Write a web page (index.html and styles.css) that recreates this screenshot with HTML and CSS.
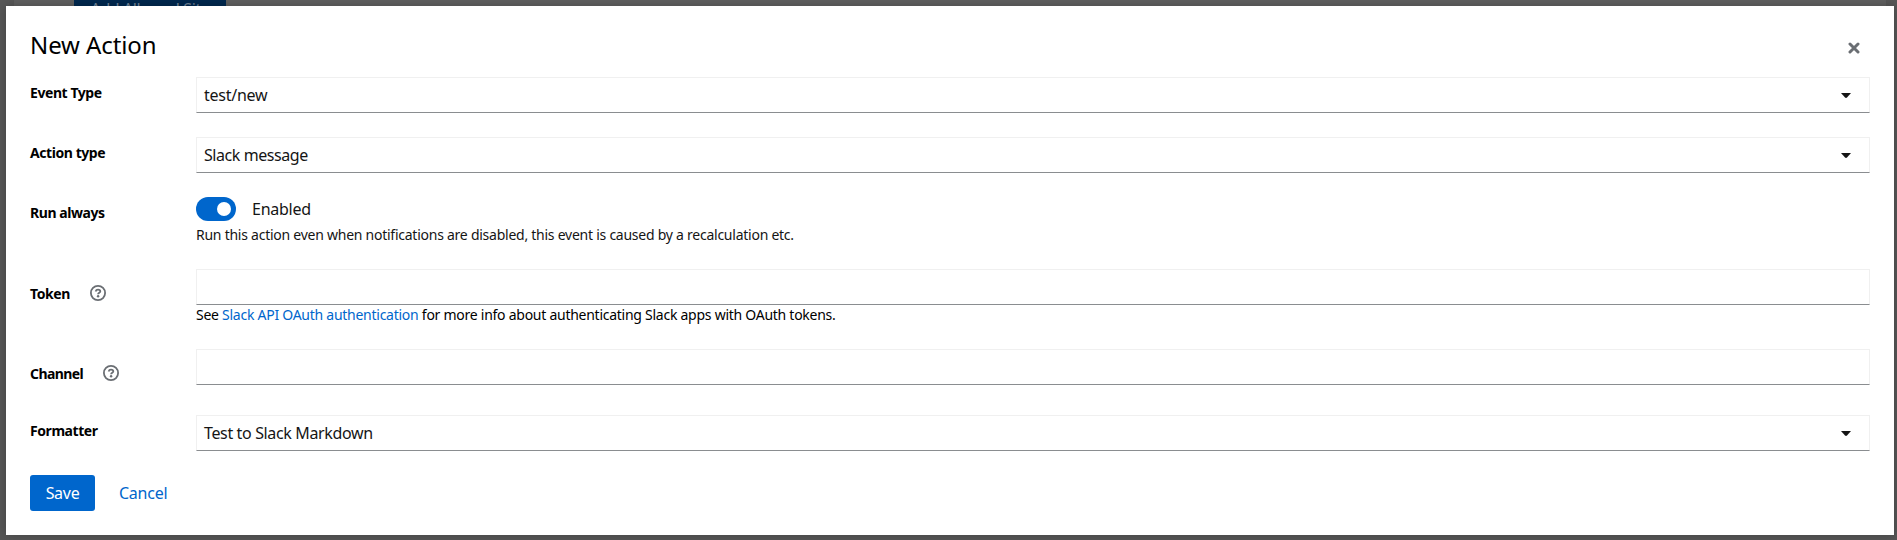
FILE: index.html
```html
<!DOCTYPE html>
<html lang="en">
<head>
<meta charset="utf-8">
<title>New Action</title>
<link rel="stylesheet" href="styles.css">
</head>
<body>
<div class="page"><span class="page-button">Add Allowed Site</span></div>
<main class="modal">
  <header class="header">
    <h1 class="title">New Action</h1>
    <button class="close" aria-label="Close"><svg width="12" height="12" viewBox="0 0 12 12"><path d="M2 2l8 8M10 2l-8 8" stroke="#6a6e73" stroke-width="3" stroke-linecap="round"/></svg></button>
  </header>
  <form class="form">
    <div class="row">
      <label class="label">Event Type</label>
      <div class="select"><span class="value-event">test/new</span><svg width="10" height="5" viewBox="0 0 10 5"><path d="M0 0h10L6 4.600Q5 5.300 4 4.600z" fill="#151515"/></svg></div>
    </div>
    <div class="row">
      <label class="label">Action type</label>
      <div class="select"><span class="value-action">Slack message</span><svg width="10" height="5" viewBox="0 0 10 5"><path d="M0 0h10L6 4.600Q5 5.300 4 4.600z" fill="#151515"/></svg></div>
    </div>
    <div class="row row-switch">
      <label class="label">Run always</label>
      <div class="control">
        <div class="switch"><span class="track"><span class="thumb"></span></span><span class="enabled">Enabled</span></div>
        <p class="help help-run">Run this action even when notifications are disabled, this event is caused by a recalculation etc.</p>
      </div>
    </div>
    <div class="row row-token">
      <label class="label">Token<svg class="hint" width="16" height="16" viewBox="0 0 16 16"><circle cx="8" cy="8" r="7.1" fill="none" stroke="#6a6e73" stroke-width="1.8"/><path d="M5.600 6.400C6 5.100 7 4.700 8 4.700c1.300 0 2.300.7 2.300 1.800C10.300 7.900 8.100 7.800 8.100 9.300" fill="none" stroke="#6a6e73" stroke-width="1.800"/><circle cx="8.100" cy="11.300" r="1.200" fill="#6a6e73"/></svg></label>
      <div class="control">
        <input class="input" type="text" aria-label="Token">
        <p class="help help-token">See <a class="link">Slack API OAuth authentication</a> for more info about authenticating Slack apps with OAuth tokens.</p>
      </div>
    </div>
    <div class="row row-channel">
      <label class="label">Channel<svg class="hint" width="16" height="16" viewBox="0 0 16 16"><circle cx="8" cy="8" r="7.1" fill="none" stroke="#6a6e73" stroke-width="1.8"/><path d="M5.600 6.400C6 5.100 7 4.700 8 4.700c1.300 0 2.300.7 2.300 1.800C10.300 7.900 8.100 7.800 8.100 9.300" fill="none" stroke="#6a6e73" stroke-width="1.800"/><circle cx="8.100" cy="11.300" r="1.200" fill="#6a6e73"/></svg></label>
      <input class="input" type="text" aria-label="Channel">
    </div>
    <div class="row">
      <label class="label">Formatter</label>
      <div class="select"><span class="value-formatter">Test to Slack Markdown</span><svg width="10" height="5" viewBox="0 0 10 5"><path d="M0 0h10L6 4.600Q5 5.300 4 4.600z" fill="#151515"/></svg></div>
    </div>
    <footer class="footer">
      <button class="save" type="button">Save</button>
      <button class="cancel" type="button">Cancel</button>
    </footer>
  </form>
</main>
</body>
</html>
```
FILE: styles.css
```css
* { box-sizing: border-box; }

body {
  margin: 0;
  height: 540px;
  overflow: hidden;
  background: #575757;
  color: #151515;
  font-family: "Noto Sans", sans-serif;
  font-size: 16px;
  line-height: 24px;
}

.page {
  height: 6px;
  margin: 0 11px 0 14px;
  padding-left: 60px;
  overflow: hidden;
  background: #606060;
}

.page-button {
  display: block;
  width: 152px;
  height: 20px;
  background: #00284f;
  color: #66788a;
  font-size: 16px;
  line-height: 18px;
  letter-spacing: -.4px;
  text-align: center;
}

.modal {
  width: 1888px;
  height: 529px;
  margin-left: 6px;
  padding: 24px;
  background: #fff;
  box-shadow: 0 0 10px rgba(0, 0, 0, .25);
}

.header {
  display: flex;
  justify-content: space-between;
  height: 47px;
}

.title {
  margin: 0;
  color: #000;
  font-size: 24px;
  font-weight: 400;
  line-height: 29px;
  letter-spacing: -.1px;
}

button {
  padding: 0;
  border: 0;
  background: none;
  font: inherit;
}

.close {
  width: 12px;
  height: 12px;
  margin: 12px 10px 0 0;
}

.close svg { display: block; }

.row {
  display: grid;
  grid-template-columns: 166px 1674px;
  align-items: start;
  height: 60px;
}

.row-switch { height: 72px; }
.row-token { height: 80px; }
.row-channel { height: 66px; }

.label {
  display: flex;
  align-items: center;
  height: 21px;
  margin-top: 5px;
  color: #000;
  font-size: 14px;
  font-weight: 700;
  letter-spacing: -.43px;
}

.row-token .label, .row-channel .label { margin-top: 14px; }
.row-channel .label { letter-spacing: -.58px; }

.hint {
  margin: -2px 0 0 20px;
}

.select, .input {
  display: flex;
  align-items: center;
  justify-content: space-between;
  width: 100%;
  height: 36px;
  margin: 0;
  padding: 0 18px 0 7px;
  border: 1px solid #f0f0f0;
  border-bottom-color: #8a8d90;
  border-radius: 0;
  background: #fff;
}

.value-event { letter-spacing: -.25px; }
.value-action { letter-spacing: -.43px; }
.value-formatter { letter-spacing: -.36px; }

.switch {
  display: flex;
  align-items: center;
  height: 24px;
}

.track {
  width: 40px;
  height: 24px;
  margin-right: 16px;
  padding: 5px 5px 5px 21px;
  border-radius: 12px;
  background: #06c;
}

.thumb {
  display: block;
  width: 14px;
  height: 14px;
  border-radius: 50%;
  background: #fff;
}

.enabled { letter-spacing: -.25px; }

.help {
  margin: 0;
  font-size: 14px;
  line-height: 21px;
  letter-spacing: -.25px;
  white-space: nowrap;
}

.help-run { margin-top: 3px; }

.help-token {
  margin-top: -1px;
  color: #000;
  letter-spacing: -.26px;
}

.control .input { display: block; }

.link { color: #06c; }

.footer { display: flex; height: 36px; }

.save {
  width: 65px;
  border-radius: 3px;
  background: #06c;
  color: #fff;
  letter-spacing: -.3px;
}

.cancel {
  margin-left: 24px;
  color: #06c;
  letter-spacing: -.25px;
}
```
